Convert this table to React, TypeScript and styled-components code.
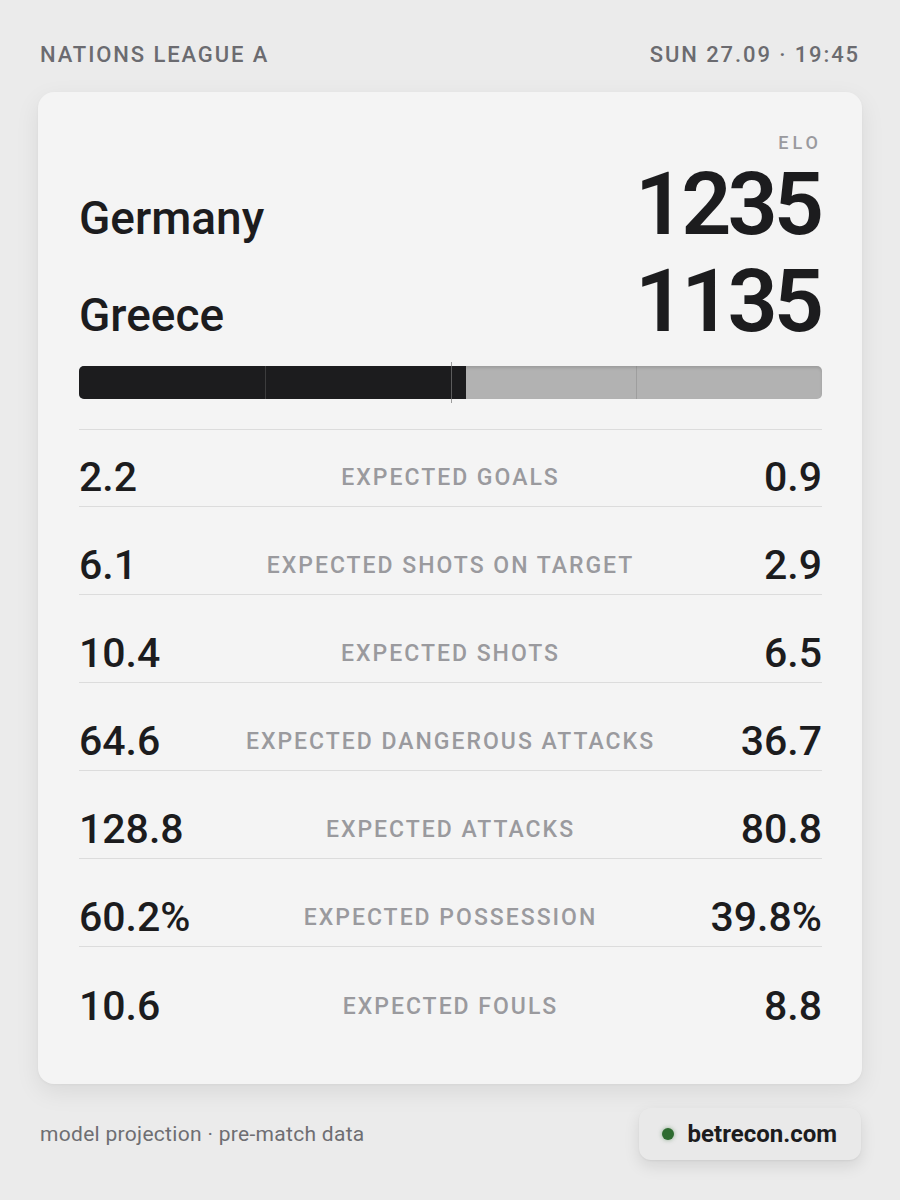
import React from "react";
import styled, { createGlobalStyle } from "styled-components";

const GlobalStyle = createGlobalStyle`
  html, body {
    margin: 0;
    padding: 0;
    background: #ebebeb;
  }
  body {
    font-family: Roboto, "Liberation Sans", sans-serif;
    color: #1c1c1e;
  }
  * { box-sizing: border-box; }
`;

const Page = styled.div`
  width: 900px;
  min-height: 1200px;
  padding: 42px 40px 40px 40px;
  display: flex;
  flex-direction: column;
  gap: 24px;
`;

const TopBar = styled.header`
  display: flex;
  justify-content: space-between;
  align-items: center;
  font-size: 22px;
  line-height: 26px;
  font-weight: 500;
  letter-spacing: 1.9px;
  color: #6b6b70;
`;

const Card = styled.section`
  margin: 0 -2px;
  background: #f4f4f4;
  border-radius: 16px;
  box-shadow: 0 8px 24px rgba(0, 0, 0, 0.08), 0 1px 3px rgba(0, 0, 0, 0.04);
  padding: 41px 40px 49px 41px;
  display: flex;
  flex-direction: column;
`;

const EloLabel = styled.div`
  text-align: right;
  font-size: 18px;
  line-height: 20px;
  font-weight: 500;
  letter-spacing: 4px;
  color: #9a9a9e;
`;

const Teams = styled.div`
  margin-top: 7px;
  display: flex;
  flex-direction: column;
  gap: 9px;
`;

const TeamRow = styled.div`
  display: flex;
  justify-content: space-between;
  align-items: baseline;
  height: 88px;
`;

const TeamName = styled.span`
  font-size: 46px;
  line-height: 46px;
  font-weight: 500;
`;

const Elo = styled.span`
  font-size: 88px;
  line-height: 88px;
  font-weight: 600;
  letter-spacing: -4px;
  margin-right: 2px;
`;

const Track = styled.div`
  position: relative;
  margin-top: 21px;
  height: 33px;
  border-radius: 5px;
  background: #b2b2b2;
  box-shadow: inset 0 2px 3px rgba(0, 0, 0, 0.12);
  display: flex;
`;

const Fill = styled.div`
  height: 100%;
  background: #1c1c1e;
  border-radius: 5px 0 0 5px;
`;

const Tick = styled.div<{ $at: number; $strong?: boolean }>`
  position: absolute;
  left: ${(p) => p.$at}%;
  top: ${(p) => (p.$strong ? "-4px" : "0")};
  bottom: ${(p) => (p.$strong ? "-4px" : "0")};
  width: 1px;
  background: ${(p) => (p.$strong ? "rgba(120,120,120,0.7)" : "rgba(120,120,120,0.35)")};
`;

const Divider = styled.div`
  margin-top: 30px;
  height: 1px;
  background: #dcdcdc;
`;

const StatRow = styled.div`
  display: grid;
  grid-template-columns: 1fr auto 1fr;
  align-items: center;
  height: 88px;
  padding-top: 30px;
  border-bottom: 1px solid #dcdcdc;
  &:first-of-type {
    height: 77px;
    padding-top: 19px;
  }
  &:last-child {
    border-bottom: none;
  }
`;

const StatValue = styled.span<{ $right?: boolean }>`
  font-size: 41px;
  line-height: 41px;
  font-weight: 500;
  text-align: ${(p) => (p.$right ? "right" : "left")};
`;

const StatLabel = styled.span`
  font-size: 23px;
  line-height: 41px;
  font-weight: 500;
  letter-spacing: 2px;
  color: #9a9a9e;
  text-align: center;
`;

const Stats = styled.div`
  display: flex;
  flex-direction: column;
`;

const Footer = styled.footer`
  display: flex;
  justify-content: space-between;
  align-items: center;
`;

const Note = styled.span`
  font-size: 21px;
  letter-spacing: 0.3px;
  color: #6e6e72;
`;

const Badge = styled.div`
  display: flex;
  align-items: center;
  gap: 14px;
  height: 52px;
  padding: 0 24px 0 23px;
  border-radius: 12px;
  background: #e9e9e9;
  box-shadow: 0 6px 16px rgba(0, 0, 0, 0.1), 0 1px 2px rgba(0, 0, 0, 0.05);
  margin-right: -1px;
`;

const Dot = styled.span`
  width: 12px;
  height: 12px;
  border-radius: 50%;
  background: #2e6b30;
  box-shadow: 0 0 4px rgba(46, 107, 48, 0.5);
`;

const Brand = styled.span`
  font-size: 24px;
  font-weight: 700;
  color: #1c1c1e;
`;

const stats = [
  ["2.2", "EXPECTED GOALS", "0.9"],
  ["6.1", "EXPECTED SHOTS ON TARGET", "2.9"],
  ["10.4", "EXPECTED SHOTS", "6.5"],
  ["64.6", "EXPECTED DANGEROUS ATTACKS", "36.7"],
  ["128.8", "EXPECTED ATTACKS", "80.8"],
  ["60.2%", "EXPECTED POSSESSION", "39.8%"],
  ["10.6", "EXPECTED FOULS", "8.8"],
];

export default function App() {
  const home = 1235;
  const away = 1135;
  const share = (home / (home + away)) * 100;
  return (
    <>
      <GlobalStyle />
      <Page>
        <TopBar>
          <span>NATIONS LEAGUE A</span>
          <span>SUN 27.09 · 19:45</span>
        </TopBar>
        <Card>
          <EloLabel>ELO</EloLabel>
          <Teams>
            <TeamRow>
              <TeamName>Germany</TeamName>
              <Elo>{home}</Elo>
            </TeamRow>
            <TeamRow>
              <TeamName>Greece</TeamName>
              <Elo>{away}</Elo>
            </TeamRow>
          </Teams>
          <Track>
            <Fill style={{ width: `${share}%` }} />
            <Tick $at={25} />
            <Tick $at={50} $strong />
            <Tick $at={75} />
          </Track>
          <Divider />
          <Stats>
            {stats.map(([a, label, b]) => (
              <StatRow key={label}>
                <StatValue>{a}</StatValue>
                <StatLabel>{label}</StatLabel>
                <StatValue $right>{b}</StatValue>
              </StatRow>
            ))}
          </Stats>
        </Card>
        <Footer>
          <Note>model projection · pre-match data</Note>
          <Badge>
            <Dot />
            <Brand>betrecon.com</Brand>
          </Badge>
        </Footer>
      </Page>
    </>
  );
}
